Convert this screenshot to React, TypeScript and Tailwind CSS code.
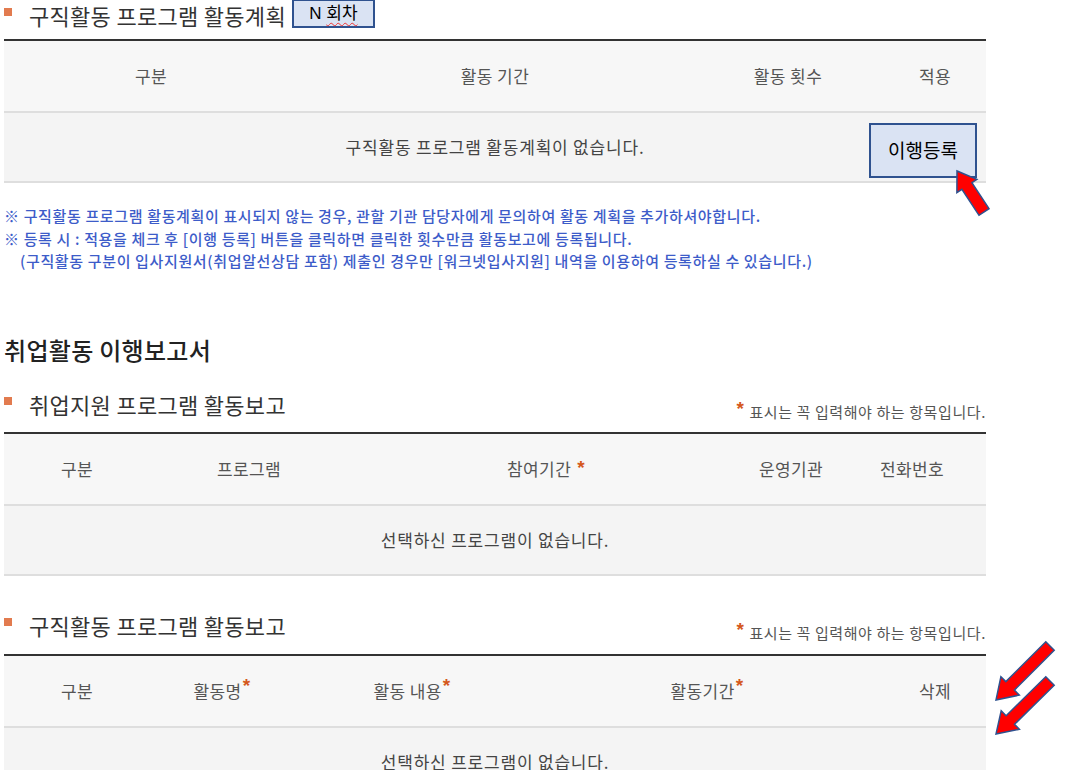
import React from "react";

const KR = "font-['Noto_Sans_CJK_KR',sans-serif]";

function Star({ gap = false }: { gap?: boolean }) {
  return (
    <span
      className={`font-['Liberation_Sans',sans-serif] font-bold text-[19px] leading-none text-[#d4581c] relative ${gap ? "-top-[2px] ml-[6px]" : "-top-[6px] ml-[1px]"}`}
    >
      *
    </span>
  );
}

function Bullet() {
  return <span className="inline-block w-[8px] h-[8px] bg-[#e27b4f] mr-[17px] shrink-0 -mt-[5px]" />;
}

function Arrow({ x1, y1, x2, y2, s, h, hl }: { x1: number; y1: number; x2: number; y2: number; s: number; h: number; hl: number }) {
  const dx = x2 - x1;
  const dy = y2 - y1;
  const L = Math.sqrt(dx * dx + dy * dy);
  const ux = dx / L;
  const uy = dy / L;
  const px = -uy;
  const py = ux;
  const bx = x1 + ux * (L - hl);
  const by = y1 + uy * (L - hl);
  const pts = [
    [x1 + px * s, y1 + py * s],
    [bx + px * s, by + py * s],
    [bx + px * h, by + py * h],
    [x2, y2],
    [bx - px * h, by - py * h],
    [bx - px * s, by - py * s],
    [x1 - px * s, y1 - py * s],
  ]
    .map((p) => `${p[0].toFixed(1)},${p[1].toFixed(1)}`)
    .join(" ");
  return <polygon points={pts} fill="#ff0000" stroke="#2f528f" strokeWidth={1.5} strokeLinejoin="miter" />;
}

function RequiredNote() {
  return (
    <div className="pt-[12px] text-[15px] leading-[20px] tracking-[0.6px] text-[#555] flex items-center">
      <span className="font-['Liberation_Sans',sans-serif] font-bold text-[19px] text-[#d4581c] relative -top-[3px] mr-[5px]">*</span>
      <span>표시는 꼭 입력해야 하는 항목입니다.</span>
    </div>
  );
}

const TH = "flex h-[72px] items-center bg-[#f7f7f7] border-b-2 border-[#dedede] text-[17px] tracking-[0.4px] text-[#555]";
const TB = "flex h-[70px] items-center justify-center bg-[#f4f4f4] border-b-2 border-[#dedede] text-[17px] tracking-[0.8px] text-[#444]";

export default function App() {
  return (
    <div className={`relative w-[1066px] h-[770px] overflow-hidden bg-white ${KR}`}>
      <div className="w-[982px] ml-[4px]">
        {/* Section 1 header */}
        <div className="flex items-center h-[29px] mb-[10px]">
          <Bullet />
          <span className="text-[22px] tracking-[0.3px] text-[#333] leading-[28px]">구직활동 프로그램 활동계획</span>
          <div className="ml-[6px] h-[29px] w-[83px] -mt-[2px] border-2 border-[#2f528f] bg-[#dae3f3] flex items-center justify-center text-[17px] text-black font-['Liberation_Sans','Noto_Sans_CJK_KR',sans-serif]">
            <span>
              N <span className="underline decoration-wavy decoration-[#e33] decoration-1 underline-offset-[3px]">회차</span>
            </span>
          </div>
        </div>

        {/* Table 1 */}
        <div className="border-t-2 border-[#333]">
          <div className={TH}>
            <div className="w-[294px] text-center">구분</div>
            <div className="w-[394px] text-center">활동 기간</div>
            <div className="w-[192px] text-center">활동 횟수</div>
            <div className="w-[102px] text-center">적용</div>
          </div>
          <div className={`relative ${TB}`}>
            <span>구직활동 프로그램 활동계획이 없습니다.</span>
            <div className="absolute left-[865px] top-[10px] w-[108px] h-[55px] border-2 border-[#2f528f] bg-[#dae3f3] flex items-center justify-center text-[19px] tracking-normal text-black">
              이행등록
            </div>
          </div>
        </div>

        {/* Notes */}
        <div className="mt-[22px] text-[15px] leading-[22.5px] tracking-[0.64px] text-[#3d5cc9] font-medium">
          <p>※ 구직활동 프로그램 활동계획이 표시되지 않는 경우, 관할 기관 담당자에게 문의하여 활동 계획을 추가하셔야합니다.</p>
          <p>※ 등록 시 : 적용을 체크 후 [이행 등록] 버튼을 클릭하면 클릭한 횟수만큼 활동보고에 등록됩니다.</p>
          <p className="pl-[16px]">(구직활동 구분이 입사지원서(취업알선상담 포함) 제출인 경우만 [워크넷입사지원] 내역을 이용하여 등록하실 수 있습니다.)</p>
        </div>

        {/* Heading */}
        <h2 className="mt-[62px] text-[24px] tracking-[0.3px] leading-[30px] font-medium text-[#222]">취업활동 이행보고서</h2>

        {/* Section 2 */}
        <div className="mt-[25px] flex justify-between items-start mb-[10px]">
          <div className="flex items-center h-[28px]">
            <Bullet />
            <span className="text-[22px] tracking-[0.3px] text-[#333] leading-[28px]">취업지원 프로그램 활동보고</span>
          </div>
          <RequiredNote />
        </div>
        <div className="border-t-2 border-[#333]">
          <div className={TH}>
            <div className="w-[146px] text-center">구분</div>
            <div className="w-[198px] text-center">프로그램</div>
            <div className="w-[396px] text-center">
              참여기간
              <Star gap />
            </div>
            <div className="w-[94px] text-center">운영기관</div>
            <div className="w-[148px] text-center">전화번호</div>
          </div>
          <div className={TB}>선택하신 프로그램이 없습니다.</div>
        </div>

        {/* Section 3 */}
        <div className="mt-[35px] flex justify-between items-start mb-[11px]">
          <div className="flex items-center h-[28px]">
            <Bullet />
            <span className="text-[22px] tracking-[0.3px] text-[#333] leading-[28px]">구직활동 프로그램 활동보고</span>
          </div>
          <RequiredNote />
        </div>
        <div className="border-t-2 border-[#333]">
          <div className={TH}>
            <div className="w-[146px] text-center">구분</div>
            <div className="w-[144px] text-center">
              활동명<Star />
            </div>
            <div className="w-[236px] text-center">
              활동 내용<Star />
            </div>
            <div className="w-[354px] text-center">
              활동기간<Star />
            </div>
            <div className="w-[102px] text-center">삭제</div>
          </div>
          <div className={TB}>선택하신 프로그램이 없습니다.</div>
        </div>
      </div>

      {/* Annotation arrows */}
      <svg className="absolute left-0 top-0 pointer-events-none" width={1066} height={770} viewBox="0 0 1066 770">
        <Arrow x1={984} y1={212} x2={957} y2={171} s={6} h={12} hl={18} />
        <Arrow x1={1050} y1={646} x2={996} y2={700} s={6} h={13} hl={20} />
        <Arrow x1={1050} y1={681} x2={996} y2={734} s={6} h={13} hl={20} />
      </svg>
    </div>
  );
}
